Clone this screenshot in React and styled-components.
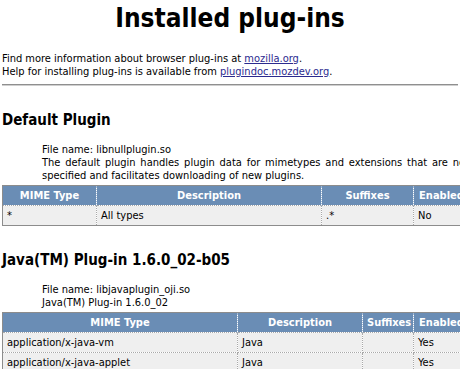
import React from "react";
import styled, { createGlobalStyle } from "styled-components";

const GlobalStyle = createGlobalStyle`
  html, body {
    margin: 0;
    overflow: hidden;
    background: #ffffff;
  }
  body {
    padding: 0 2px;
    font-family: "DejaVu Sans Condensed", "DejaVu Sans", sans-serif;
    font-stretch: condensed;
    font-size: 11px;
    line-height: 13px;
    color: #000000;
  }
`;

const Title = styled.h1`
  margin: 3px 0 19px;
  font-size: 26px;
  line-height: 30px;
  font-weight: bold;
  text-align: center;
`;

const Intro = styled.p`
  margin: 0;
`;

const Link = styled.a`
  color: #2b2a8f;
  text-decoration: underline;
`;

const Rule = styled.hr`
  margin: 6px 0 0;
  height: 0;
  border: none;
  border-top: 1px solid #8f8f8f;
  border-bottom: 1px solid #cfcfcf;
`;

const Plugin = styled.div`
  width: 467px;
  margin-top: 26px;
`;

const Name = styled.h2`
  margin: 0;
  font-size: 15px;
  line-height: 17px;
  font-weight: bold;
`;

const Details = styled.dl`
  margin: 14px 0 0;
`;

const Detail = styled.dd`
  margin: 0 0 0 40px;
  text-align: justify;
`;

const Table = styled.table`
  width: 467px;
  margin-top: 3px;
  table-layout: fixed;
  border-collapse: collapse;
  border: 1px solid #8c8c8c;
`;

const Col = styled.col`
  width: ${(p) => p.$w}px;
`;

const Head = styled.th`
  padding: 3px 4px;
  background: #6a8db5;
  color: #ffffff;
  font-weight: bold;
  text-align: center;
  white-space: nowrap;
  overflow: hidden;
  border-left: 1px dotted #a3b9d2;
  &:first-child {
    border-left: none;
  }
`;

const Cell = styled.td`
  padding: 3px 4px;
  background: #efefef;
  white-space: nowrap;
  overflow: hidden;
  border: 1px dotted #a8a8a8;
  &:first-child {
    border-left: none;
  }
`;

const plugins = [
  {
    name: "Default Plugin",
    file: "libnullplugin.so",
    desc:
      "The default plugin handles plugin data for mimetypes and extensions that are not specified and facilitates downloading of new plugins.",
    cols: [94, 225, 92, 56],
    rows: [["*", "All types", ".*", "No"]],
  },
  {
    name: "Java(TM) Plug-in 1.6.0_02-b05",
    file: "libjavaplugin_oji.so",
    desc: "Java(TM) Plug-in 1.6.0_02",
    cols: [235, 125, 51, 56],
    rows: [
      ["application/x-java-vm", "Java", "", "Yes"],
      ["application/x-java-applet", "Java", "", "Yes"],
      ["application/x-java-applet;version=1.1", "Java", "", "Yes"],
    ],
  },
];

const App = () => (
  <>
    <GlobalStyle />
    <Title>Installed plug-ins</Title>
    <Intro>
      Find more information about browser plug-ins at{" "}
      <Link href="#">mozilla.org</Link>.
      <br />
      Help for installing plug-ins is available from{" "}
      <Link href="#">plugindoc.mozdev.org</Link>.
    </Intro>
    <Rule />
    {plugins.map((pl) => (
      <Plugin key={pl.name}>
        <Name>{pl.name}</Name>
        <Details>
          <Detail>File name: {pl.file}</Detail>
          <Detail>{pl.desc}</Detail>
        </Details>
        <Table>
          <colgroup>
            {pl.cols.map((w, i) => (
              <Col key={i} $w={w} />
            ))}
          </colgroup>
          <thead>
            <tr>
              <Head>MIME Type</Head>
              <Head>Description</Head>
              <Head>Suffixes</Head>
              <Head>Enabled</Head>
            </tr>
          </thead>
          <tbody>
            {pl.rows.map((r) => (
              <tr key={r[0]}>
                {r.map((c, i) => (
                  <Cell key={i}>{c}</Cell>
                ))}
              </tr>
            ))}
          </tbody>
        </Table>
      </Plugin>
    ))}
  </>
);

export default App;
